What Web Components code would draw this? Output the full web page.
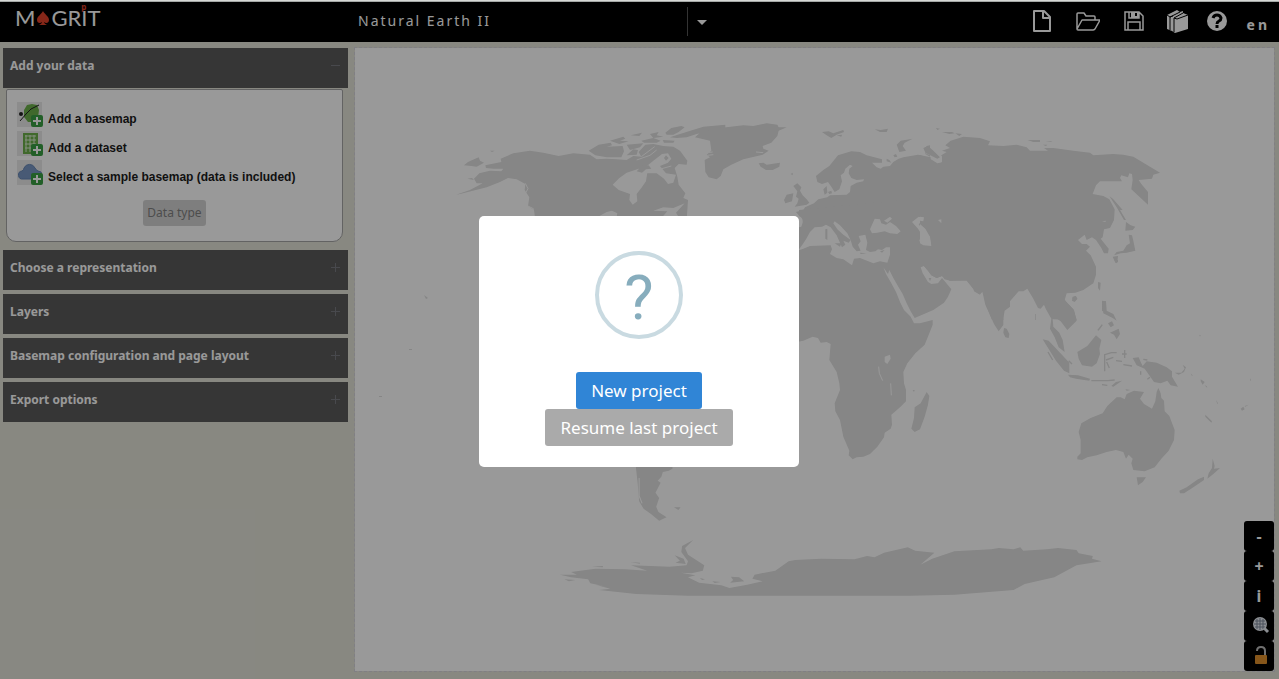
<!DOCTYPE html>
<html lang="en">
<head>
<meta charset="utf-8">
<title>Magrit</title>
<style>
html,body{height:100%;margin:0}
body{font-family:"Noto Sans","Open Sans",sans-serif;overflow:hidden}
</style>
</head>
<body>
<magrit-app></magrit-app>
<script>
function define(name, html) {
  const t = document.createElement('template');
  t.innerHTML = html;
  customElements.define(name, class extends HTMLElement {
    constructor() {
      super();
      this.attachShadow({mode: 'open'}).append(t.content.cloneNode(true));
    }
  });
}

define('magrit-logo', `
<style>
:host{display:block}
a{display:flex;align-items:center;color:#fff;text-decoration:none;font:22px/30px Lato,sans-serif}
svg{width:14px;height:16px;margin:0 1px}
.i{position:relative}
.p{position:absolute;left:0;top:0;font:bold 8px/8px "Noto Sans",sans-serif;color:#e0412a}
</style>
<a href="#"><span>M</span><svg viewBox="0 0 14 16"><path fill="#e0412a" d="M7 1C6 4 1 6 1 10c0 3 3 4 5 2 0 1-1 2-3 3h8c-2-1-3-2-3-3 2 2 5 1 5-2 0-4-5-6-6-9z"/></svg><span>GR</span><span class="i">I<span class="p">p</span></span><span>T</span></a>`);

define('magrit-header', `
<style>
:host{display:grid;grid-template-columns:340px 375px 1fr;height:40px;background:#000;color:#fff}
magrit-logo{padding:1px 0 0 15px}
.title{display:flex;align-items:center;padding-left:18px}
select{flex:1;appearance:none;border:0;border-right:1px solid #555;background:none;color:#fff;font:14px/20px "Noto Sans",sans-serif;letter-spacing:2px;height:29px;margin-bottom:2px;padding:0;border-radius:0}
.caret{width:10px;height:5px;margin:0 8px 0 9px}
nav{display:flex;align-items:center;justify-content:flex-end;gap:20px;padding-right:9px}
nav button{display:flex;align-items:center;justify-content:center;background:none;border:0;padding:0;color:#fff;width:26px;height:28px;margin-bottom:2px}
nav .narrow{width:20px}
nav svg{flex:none;width:24px;height:24px;fill:none;stroke:currentColor;stroke-width:2}
nav .lang{width:auto;font:bold 14px/20px "Noto Sans",sans-serif;letter-spacing:3px;margin:5px 0 0}
</style>
<magrit-logo></magrit-logo>
<div class="title">
  <select aria-label="Projection"><option>Natural Earth II</option></select>
  <svg class="caret" viewBox="0 0 10 5"><path fill="#fff" d="M0 0h10L5 5z"/></svg>
</div>
<nav>
  <button aria-label="New project"><svg viewBox="0 0 24 24"><path stroke-linejoin="round" d="M4 2h10l6 6v14H4zM13 2v7h7"/></svg></button>
  <button aria-label="Open project"><svg viewBox="0 0 24 24"><path stroke-width="1.500" stroke-linejoin="round" d="M1 20V5q0-1 1-1h6l2 3h8q1 0 1 1v3M1 20l5-9h18l-5 9q-1 1-2 1H2q-1 0-1-1z"/></svg></button>
  <button aria-label="Save project"><svg viewBox="0 0 24 24"><path stroke-width="1.500" d="M3 3h14l4 4v14H3zM6 21v-8h12v8M7 3v6h10V3"/><path fill="currentColor" stroke="none" d="M9 3h8v6H9z"/><path stroke="#000" d="M14 4v3"/></svg></button>
  <button class="narrow" aria-label="Documentation"><svg viewBox="0 0 24 24"><path fill="currentColor" stroke="none" d="M2 6L12 1l3 2 3-1v2l5 2v14L10 24l-3-2-5-2z"/><path stroke="#000" stroke-width="1" d="M5 21V8l10-5M9 23V9l9-5M2 6l3 2M5 8l3-1M9 9l3 1 11-4"/></svg></button>
  <button class="narrow" aria-label="Help"><svg viewBox="0 0 24 24"><circle cx="12" cy="12" r="10" fill="currentColor" stroke="none"/><path stroke="#000" stroke-width="3" d="M8 9q1-3 4-3t4 3q0 2-2 3t-2 3M12 16v3"/></svg></button>
  <button class="lang">en</button>
</nav>`);

customElements.define('accordion-section', class extends HTMLElement {
  connectedCallback() {
    if (this.shadowRoot) return;
    const open = this.hasAttribute('open');
    this.attachShadow({mode: 'open'}).innerHTML = `
<style>
:host{display:block}
h2{margin:0}
button{display:flex;justify-content:space-between;width:100%;height:40px;border:0;background:#5a5a5a;color:#fff;padding:9px 7px 0;text-align:left;font:bold 12px/17px "Noto Sans",sans-serif}
svg{width:11px;height:11px;margin-top:3px;stroke:#787b80}
</style>
<h2><button aria-expanded="${open}"><slot name="heading"></slot><svg viewBox="0 0 11 11"><path d="M1 5.500h9${open ? '' : 'M5.500 1v9'}"/></svg></button></h2>
<slot></slot>`;
  }
});

define('source-item', `
<style>
:host{display:block}
button{display:flex;align-items:flex-end;gap:6px;border:0;background:none;padding:0;height:25px;color:#1c1c1c;font:bold 12px/16px "Liberation Sans",Arial,sans-serif}
.ic{position:relative;width:25px;height:25px;background:#eaeaea}
.ic ::slotted(svg){width:25px;height:25px;display:block}
.plus{position:absolute;right:-1px;bottom:0;width:12px;height:12px}
</style>
<button><span class="ic"><slot name="icon"></slot><svg class="plus" viewBox="0 0 12 12"><rect width="12" height="12" rx="2" fill="#3a9e44"/><path stroke="#fff" stroke-width="2" d="M6 2v8M2 6h8"/></svg></span><slot></slot></button>`);

define('magrit-menu', `
<style>
:host{display:flex;flex-direction:column;gap:4px}
.panel{display:flex;flex-direction:column;gap:4px;margin:1px 5px 4px 3px;padding:12px 10px 15px;background:#fff;border:1px solid #a6a6a6;border-radius:2px 2px 10px 10px}
.type{align-self:center;margin-top:11px;height:26px;padding:0 4px;border:0;border-radius:3px;background:#d3d3d3;color:#808080;font:12px/18px "Noto Sans",sans-serif}
</style>
<accordion-section open>
  <span slot="heading">Add your data</span>
  <div class="panel">
    <source-item><svg slot="icon" viewBox="0 0 25 25"><path fill="#6cb04a" d="M7 8l3-5 5-1 5 1 2 5-1 8-4 4h-6l-4-5z"/><path fill="none" stroke="#222" d="M3 19L9 12 14 7 22 3"/><circle cx="4" cy="12" r="2" fill="#222"/></svg>Add a basemap</source-item>
    <source-item><svg slot="icon" viewBox="0 0 25 25"><path fill="#6cb04a" d="M6 2h15v21H6z"/><path stroke="#ddeed5" d="M8 5h11M8 9h11M8 13h11M8 17h11M9 4v17M13 4v17M17 4v17"/></svg>Add a dataset</source-item>
    <source-item><svg slot="icon" viewBox="0 0 25 25"><path fill="#7897c4" stroke="#6585b4" d="M6 19a4 4 0 0 1-1-8Q7 10 7 8a6 6 0 0 1 11 0q1 2 3 3a4 4 0 0 1 0 8z"/></svg>Select a sample basemap (data is included)</source-item>
    <button class="type">Data type</button>
  </div>
</accordion-section>
<accordion-section><span slot="heading">Choose a representation</span></accordion-section>
<accordion-section><span slot="heading">Layers</span></accordion-section>
<accordion-section><span slot="heading">Basemap configuration and page layout</span></accordion-section>
<accordion-section><span slot="heading">Export options</span></accordion-section>`);

define('map-tools', `
<style>
:host{display:flex;flex-direction:column;width:30px}
button{height:30px;border:0;border-radius:3px;background:#000;color:#fff;padding:0;display:flex;align-items:center;justify-content:center;font:bold 16px/20px "Noto Sans",sans-serif}
svg{width:18px;height:20px;margin:0 0 3px 4px}
</style>
<button>-</button><button>+</button><button>i</button>
<button aria-label="Fit to layer"><svg viewBox="0 0 18 20"><circle cx="8" cy="9" r="7" fill="#e6ebf2"/><path stroke="#7c8799" fill="none" d="M3 6h10M2 9h12M3 12h10M5 4v10M8 3v12M11 4v10"/><path stroke="#e6ebf2" stroke-width="3" d="M12 13l4 4"/></svg></button>
<button aria-label="Unlock zoom"><svg viewBox="0 0 18 20"><rect x="3" y="10" width="12" height="9" rx="1" fill="#e0902c"/><path stroke="#bbb" stroke-width="2" fill="none" d="M5 6q0-4 4-4t4 4v4"/></svg></button>`);

/* Each group of the map keeps its own drawing origin, three units to a pixel. */
define('world-map', `
<style>
:host{display:block;position:relative;background:#fff;outline:1px dashed #d6d4dc}
.map{display:block;width:100%;height:100%;fill:#dfdfdf}
.map .w{fill:#fff}
.map .l{fill:none;stroke:#dfdfdf;stroke-width:4}
.map .wl{fill:none;stroke:#fff;stroke-width:3}
map-tools{position:absolute;right:0;bottom:0}
</style>
<svg class="map" viewBox="355 48 919 623" preserveAspectRatio="xMidYMid meet" role="img" aria-label="World map">
<g transform="translate(440 110) scale(.33333)">
<path d="M48 254L90 240 128 220 110 220 102 206 118 190 150 182 184 184 190 176 160 176 138 174 136 166 184 156 182 146 220 130 270 122 310 128 356 138 400 130 450 134 470 148 500 146 530 148 560 150 580 138 604 140 596 126 616 104 640 102 670 108 700 110 720 122 742 152 740 164 716 162 704 174 712 200 716 224 736 250 730 264 744 270 740 330H286L282 300 264 288 268 262 254 240 256 222 230 208 204 204 180 216 140 232 60 252Z"/>
<path d="M72 166L84 156 116 142 120 152 132 158 110 170 94 168ZM82 206l14-2 6 6zM150 122l14 0-8 4zM446 122L476 104 512 98 516 106 500 110 548 108 552 124 544 142 500 142 466 136ZM510 92L550 80 556 86 540 92 566 94 538 102ZM572 76L606 68 598 78ZM560 104L610 100 600 112 570 120ZM604 92L640 84 662 92 650 98 612 98ZM630 72L656 66 650 76 670 80 640 84ZM668 90L704 92 700 98 672 98ZM676 68L694 54 724 48 734 52 716 66 700 74 680 74ZM720 72L790 50 856 44 856 54 800 66 770 72 740 82 710 84 690 82ZM560 136L580 118 594 120 590 134Z"/>
<path class="w" d="M518 224L538 204 560 188 596 176 622 188 618 214 604 234 590 252 592 274 578 284 568 270 570 252 536 240ZM606 180L640 152 666 132 684 130 694 146 684 158 660 168 678 190 708 194 700 218 684 222 672 206 650 190 622 190ZM478 318L500 306 516 302 532 310 530 320ZM640 302L670 292 700 294 734 280 708 308 718 324 664 324 682 304Z"/>
<path d="M590 184L606 168 626 166 634 176 618 178 606 188ZM672 144l6-8 8 8-8 8z"/>
<path class="wl" d="M256 220l8 16-8 14M250 262l12 14M264 288l16 8-4 16M604 140l40-30M590 150l40-14 20-16M644 182l50-14"/>
</g>
<g transform="translate(690 110) scale(.33333)">
<path d="M15 82L30 68 90 54 160 46 190 48 230 40 262 44 266 52 290 52 266 62 262 78 244 98 218 108 220 116 236 122 218 134 160 148 124 164 100 178 92 198 80 208 56 202 46 186 44 150 60 142 50 134 64 122 60 92Z"/>
<path class="wl" d="M52 128l16-2M52 136l18-2M198 126l22 2"/>
<path d="M206 160L220 158 230 164 270 158 268 170 248 180 228 180 212 170ZM396 66L416 64 430 70 460 60 462 66 440 74 424 84 410 76ZM440 76l16-2-2 6zM554 58L572 60 594 56 590 66 570 66ZM620 104L632 92 668 86 644 98 638 108 648 122 628 126ZM590 146l8 4 6 8-14-4zM610 136l8-4 4 8-8 2zM702 120L710 108 720 106V140L706 132ZM302 192l6-4 0 8zM310 228L322 220 334 232 330 242 338 256 350 268 358 278 350 284 314 290 322 280 326 266 318 260 322 244ZM282 270L290 254 310 250 306 274 286 280ZM400 238l10-10 2 20-8 6zM414 246l10-4 2 8-8 2z"/>
<path d="M327 360L338 345 340 330 328 318 318 306 340 300 345 292 372 280 385 268 412 262 420 256 470 254 480 246 482 228 500 218 520 214 522 208 500 210 484 204 476 190 478 176 488 168 480 164 466 176 462 188 452 196 456 214 448 238 434 246 424 230 414 216 396 222 382 216 378 198 400 180 418 168 444 136 484 124 510 126 530 136 576 148 576 158 546 158 560 172 572 176 580 170 600 168 610 156 626 146 640 142 684 134 704 138 722 142V310H600L400 310Z"/>
</g>
<g transform="translate(790 190) scale(.33333)">
<path d="M27 60L660 0V350L644 362 640 384 640 405 626 424 612 402 598 370 586 344 576 300 570 314 552 304 550 294 530 270 480 272 464 268 456 258 440 264 424 256 414 242 402 228 392 232 398 250 414 276 424 282 444 280 456 264 466 276 484 298 474 320 462 338 430 360 374 384 362 364 350 340 338 312 326 292 310 264 298 240 294 252 280 232 288 252 304 280 318 306 330 336 342 360 362 380 372 400 390 400 428 390 428 404 418 430 404 464 376 490 352 520 340 546 342 580 348 600 348 634 330 652 304 674 306 704 302 716 284 728 282 742 262 770 240 792 220 800 200 802 188 808 176 796 178 782 160 740 154 710 150 690 136 664 134 640 150 600 148 580 140 546 118 510 122 462 110 456 92 458 84 444 68 440 40 452 20 456V183L40 176 60 168 122 166 126 178 120 192 140 204 160 208 186 226 192 206 210 204 250 220 270 214 292 218 300 194 300 172 288 172 276 180 264 178 256 184 240 186 228 180 232 158 226 134 206 138 212 154 204 164 212 182 200 184 188 170 182 150 172 130 150 106 134 94 130 100 142 118 160 134 182 150 176 158 160 152 166 164 156 172 150 158 140 136 122 112 108 104 96 110 74 112 60 126 48 148 36 166 27 178Z"/>
<path class="w" d="M27 78Q40 84 38 98L34 110 27 112ZM240 118L248 100 254 86 270 88 274 100 288 104 300 96 318 108 332 124 322 132 300 130 284 124 262 128 246 130ZM282 92L300 80 306 86 292 98ZM366 96L386 80 402 84 400 94 386 102 400 124 418 138 424 166 412 170 392 164 388 150 398 138 384 116ZM446 90l8-2-4 16zM440 122l4 0-2 6zM284 500L300 494 302 506 292 522 284 516Z"/>
<path class="wl" d="M266 530l2 20 10 22M302 580l2 36"/>
<path d="M106 118l6-2 0 34-6-4zM134 160L154 160 150 170ZM210 188l20 2-18 2zM270 184l14-4-8 8zM374 652L392 640 410 606 418 618 414 644 404 680 390 718 374 726 364 716 372 684ZM642 414L650 416 658 432 656 444 646 442 640 428ZM368 600l6 0-2 6zM416 264l8 0-4 10z"/>
</g>
<g transform="translate(920 120) scale(.33333)">
<path d="M0 105L30 116 52 130 66 126 64 106 80 96 66 92 90 84 76 76 92 62 130 50 180 54 210 64 204 76 250 78 290 74 320 82 330 92 384 92 372 84 400 84 460 92 510 98 520 106 580 102 610 104 640 110 690 140 720 158 700 164 696 176 656 180 664 192 684 216 684 254 634 208 638 180 636 162 628 160 624 172 604 166 600 174 606 184 540 184 528 196 518 222 550 228 568 238 584 268 582 300 570 324 552 328 548 352 542 356 566 386 564 400 552 400 544 384 528 360 516 352 500 360 494 344 474 360 486 372 500 372 510 380 498 392 512 406 528 440 528 464 520 490 490 510 466 518 440 520 434 540 460 568 470 600 400 598 396 588 380 560 372 554 362 566 354 564 340 536 322 506 310 514 296 514 266 548 250 570 250 600H216L200 560 190 514 180 522 164 512 140 482 90 482 66 468 50 474 34 466 24 452 12 438 0 436V340L14 344 34 376 30 350 20 330 0 312V210Z"/>
<path class="w" d="M54 300l10-2 0 12zM0 290L12 292 10 304 0 302ZM0 312L16 326 30 350 34 378 10 376 0 370ZM10 84L52 112 66 108 66 126 52 130 60 118 12 98ZM546 304l12-2-2 4z"/>
<path d="M10 84L24 78 40 92 60 112 52 116 16 98ZM48 24l12 2-8 4zM66 36l30 0 8 4-16 2zM106 40l20 2-8 6zM322 60l38 0 0 6-20 0zM376 64l22 0-6 2zM368 74l14 0-4 4zM568 228L580 238 608 270 600 270 618 300 612 300 590 262ZM618 306L632 316 646 320 638 330 616 332ZM626 344L636 346 640 362 646 392 620 398 602 400 582 406 590 396 610 392 620 376 630 370ZM578 410L594 408 592 426 586 428ZM534 486l8 2-2 24-6-8zM456 534l10-6 6 8-8 8zM546 544l12 0 0 26-12 4zM346 582h2v18h-2z"/>
</g>
<g transform="translate(1000 260) scale(.33333)">
<path d="M130 130L190 110 198 126 222 150 230 182 202 210 182 184 164 172 158 178 160 200 178 218 188 240 194 276 176 262 164 232 150 206 154 176 138 148ZM128 238L146 242 180 278 208 308 208 340 192 332 168 302ZM204 344L234 346 270 356 268 362 228 356 210 352ZM232 276L262 258 288 226 304 240 298 266 300 282 290 310 276 320 246 316 236 296ZM306 122L318 124 320 152 340 162 350 182 338 174 310 160ZM324 190L336 184 342 196 332 202ZM330 218L356 206 360 222 350 238 342 224ZM292 210L306 192 308 196 296 212ZM398 294L416 292 422 306 428 318 440 304 470 308 500 322 516 334 516 350 534 380 512 376 502 362 482 370 462 366 452 352 434 326 410 316ZM334 378L348 366 366 362 340 380ZM376 388l16 2-12 2zM524 338L544 338 554 326 548 314 558 322 552 336 536 344ZM602 358l12 8-6 8-6-10zM614 376l6 2 2 6zM572 340l6 6-2 2zM648 420l6 10-2 2zM616 464l20 20-2 4-18-18zM722 446l8-6 4 8-8 4zM734 438l12-4-10 6zM410 652L438 652 428 666 414 676ZM538 692L560 682 594 658 612 650 612 660 580 682 552 700 540 700ZM638 596L644 618 642 626 660 624 640 642 622 656 626 640 636 624ZM218 110l10-2 4 8-8 10-8-4zM598 224l4 2-2 4zM344 0h10v6l-6 4zM750 356h2v6h-2z"/>
<path class="l" d="M314 334l0-50 20-6 16 0M318 300l22-8M320 306l8 18M374 270l0 24M366 282l14 0M274 362l50 0 20-2M306 374l16 2M370 314l26 4M348 302l18 2M442 358l8-6M430 298l12 2M144 276l14 24M206 302l10 10M422 334v10"/>
<path d="M232 590L242 580 242 540 236 516 244 490 272 474 308 460 322 438 350 412 362 412 374 418 380 402 402 392 432 396 420 416 432 432 456 446 466 424 470 396 475 384 482 400 484 414 492 422 494 454 508 468 524 510 522 540 506 572 484 596 464 622 434 634 400 630 394 610 398 596 386 584 378 596 370 576 348 570 320 576 290 586 262 592 246 600 232 598Z"/>
</g>
<g transform="translate(540 450) scale(.37 .33333)">
<path d="M258 40H358V56L348 62 332 66 328 80 318 92 326 98 312 128 322 144 314 170 320 186 342 202 322 212 300 192 280 176 268 154 264 100ZM362 172l18 0-6 8z"/>
<path d="M54 374L100 374 84 366 150 356 230 358 290 362 246 346 350 350 396 346 400 334 382 306 384 288 414 270 392 294 400 314 444 346 440 362 410 370 380 368 420 376 400 382 430 398 490 406 512 414 560 404 602 394 574 386 580 374 636 362 672 334 690 330 760 326 850 328 884 318 904 322 930 308 994 292 1014 302 1066 308 1028 344 1060 326 1120 304 1220 298 1240 294 1280 298 1298 292 1306 302 1370 298 1400 294 1450 300 1456 310 1494 318 1492 326 1518 334 1450 346 1390 382 1310 402 1280 420 1120 434 1000 437H400L260 432 160 420 190 416 150 404 180 410 136 400 130 388 84 382ZM364 316L388 326 394 342 366 338 378 332ZM140 350l30-2 0 4zM244 336l26 2 0 3zM66 388l30 2-18 4zM516 380L538 382 552 394 514 398 522 390ZM432 384l14 4-8 2zM466 394l22 2-16 3z"/>
<path class="wl" d="M268 84v54l8 22"/>
</g>
<path d="M424 295l4 3-2 1zM409 349h3v1h-3zM379 396h3v1h-3z"/>
</svg>
<map-tools></map-tools>`);

define('project-dialog', `
<style>
:host{box-sizing:border-box;display:flex;align-items:center;justify-content:center;padding:2px 1px 0 0;background:rgba(0,0,0,.4)}
.box{box-sizing:border-box;width:320px;padding:35px 20px 21px;border-radius:5px;background:#fff;display:flex;flex-direction:column;align-items:center}
.mark{box-sizing:border-box;width:88px;height:88px;margin-bottom:33px;border:4px solid #c9dae1;border-radius:50%;color:#87adbd;text-align:center;font:62px/86px Roboto,"Liberation Sans",sans-serif}
button{height:37px;border:0;border-radius:3px;padding:0 15px;color:#fff;background:#aaa;font:17px/24px "Noto Sans",sans-serif}
.primary{background:#3085d6}
</style>
<div class="box" role="dialog" aria-label="Project">
  <div class="mark">?</div>
  <button class="primary">New project</button>
  <button>Resume last project</button>
</div>`);

define('magrit-app', `
<style>
:host{display:flex;flex-direction:column;height:100%;background:#e3e3d8}
.edge{height:2px;background:linear-gradient(#d6d8d6 50%,#a4a8a6 50%)}
.app{position:relative;flex:1;display:flex;flex-direction:column;min-height:0}
main{flex:1;display:grid;grid-template-columns:345px 1fr;gap:7px;padding:6px 5px 8px 3px;min-height:0}
world-map{min-width:0;min-height:0}
project-dialog{position:absolute;inset:0}
</style>
<div class="edge"></div>
<div class="app">
  <magrit-header></magrit-header>
  <main><magrit-menu></magrit-menu><world-map></world-map></main>
  <project-dialog></project-dialog>
</div>`);
</script>
</body>
</html>
